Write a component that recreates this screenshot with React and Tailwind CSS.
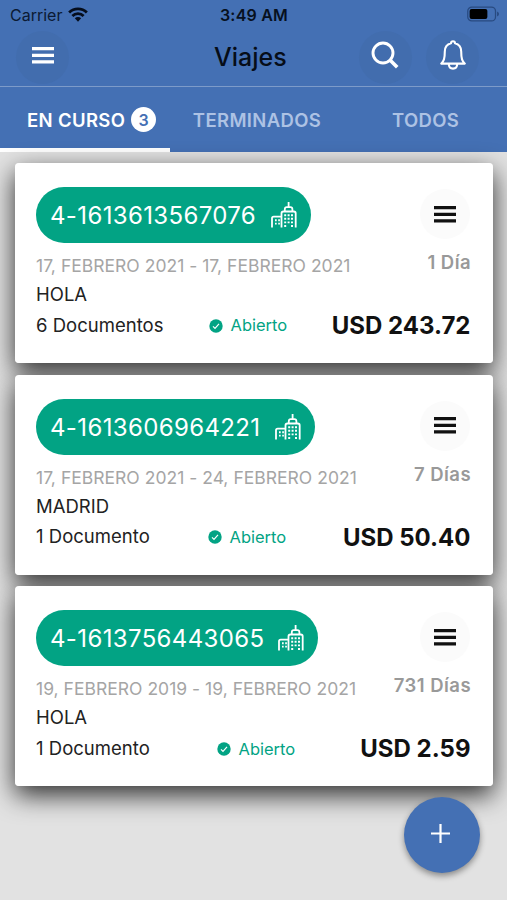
import React from "react";

const trips = [
  { id: "4-1613613567076", pill: "w-[275px]", dates: "17, FEBRERO 2021 - 17, FEBRERO 2021", place: "HOLA", docs: "6 Documentos", days: "1 Día", total: "USD 243.72", status: "pl-[172.5px]" },
  { id: "4-1613606964221", pill: "w-[279px]", dates: "17, FEBRERO 2021 - 24, FEBRERO 2021", place: "MADRID", docs: "1 Documento", days: "7 Días", total: "USD 50.40", status: "pl-[171.5px]" },
  { id: "4-1613756443065", pill: "w-[282px]", dates: "19, FEBRERO 2019 - 19, FEBRERO 2021", place: "HOLA", docs: "1 Documento", days: "731 Días", total: "USD 2.59", status: "pl-[180.5px]" },
];

function MenuIcon({ className }) {
  return (
    <svg className={className} viewBox="0 0 22 17" fill="currentColor">
      <path d="M0 0h22v3.3H0zM0 6.7h22V10H0zM0 13.3h22v3.3H0z" />
    </svg>
  );
}

function BuildingIcon() {
  return (
    <svg className="h-[26px] w-[26px]" viewBox="0 0 26 26" fill="none" stroke="#fff" strokeWidth="1.8">
      <path d="M17.600 0v5M13.800 9.400V7.300Q13.800 5.200 15.800 5.200h3.600Q21.400 5.200 21.400 7.300V9.400M10.500 25.500V11.400Q10.500 9.500 12.400 9.500h10.400Q24.700 9.500 24.700 11.400v14.100M1 25.500V16.300q0-1.700 1.700-1.700h7.800" />
      <path strokeWidth="1.900" d="M13.200 13.200h2M16.600 13.200h2M20 13.200h2M13.200 16.800h2M16.600 16.800h2M20 16.800h2M13.200 20.400h2M16.600 20.400h2M20 20.400h2M13.200 24h2M20 24h2M4 18.200h1.700M7.200 18.200h1.700M4 21.600h1.700M7.200 21.600h1.700" />
    </svg>
  );
}

function TripCard({ trip }) {
  return (
    <article className="h-[200px] shrink-0 rounded shadow-[0_9px_26px_rgba(0,0,0,0.8)]">
      <div className="relative z-10 flex h-full flex-col rounded bg-white pl-[21.5px] pr-[22.5px] pt-6">
        <div className="flex h-14 justify-between">
          <div className={`flex h-14 items-center justify-between rounded-full bg-[#02a384] pl-[14px] pr-[14px] text-white ${trip.pill}`}>
            <span className="whitespace-nowrap pt-[2px] text-[24px] leading-none tracking-[0.36px]">{trip.id}</span>
            <BuildingIcon />
          </div>
          <div className="mr-[1px] mt-[2px] flex h-[50px] w-[50px] items-center justify-center rounded-full bg-[#fbfbfb] text-[#111]">
            <MenuIcon className="h-[17px] w-[22px]" />
          </div>
        </div>
        <div className="mt-[10px] flex h-[27px] justify-between whitespace-nowrap text-[18px] leading-[26px] text-[#a5a5a5]">
          <span className="text-[17.5px] tracking-[0.02px]">{trip.dates}</span>
          <span className="-mr-[0.5px] -mt-[4px] text-[18.5px] font-semibold tracking-[0.45px] text-[#999]">{trip.days}</span>
        </div>
        <div className="h-[29px] text-[18.5px] leading-[28px] text-[#222]">{trip.place}</div>
        <div className="grid h-[31px] grid-cols-1 items-center whitespace-nowrap">
          <span className="col-start-1 row-start-1 text-[18.5px] tracking-[0.02px] text-[#222]">{trip.docs}</span>
          <div className={`col-start-1 row-start-1 flex items-center justify-between ${trip.status}`}>
            <span className="flex items-center gap-2 text-[16.5px] text-[#02a384]">
              <svg className="h-[14px] w-[14px]" viewBox="0 0 14 14">
                <circle cx="7" cy="7" r="6.7" fill="#02a384" />
                <path d="m4 7.3 2 2 4-4.4" fill="none" stroke="#fff" strokeWidth="1.2" />
              </svg>
              Abierto
            </span>
            <span className="pt-[1px] text-[24px] font-bold leading-8 text-[#111]">{trip.total}</span>
          </div>
        </div>
      </div>
    </article>
  );
}

export default function App() {
  return (
    <div className="relative flex h-[900px] w-[507px] flex-col overflow-hidden bg-[#e2e2e2] font-['Inter','Liberation_Sans',sans-serif]">
      <header className="flex h-[152px] shrink-0 flex-col bg-[#4470b4]">
        <div className="grid h-[29px] grid-cols-3 items-center pl-[10px] pr-[8px] text-black">
          <div className="flex items-center gap-[6px] text-[16px] text-[#0b1a33]">
            Carrier
            <svg className="h-[15px] w-[20px]" viewBox="0 0 21 15" fill="none" stroke="#050d1c" strokeWidth="2.9">
              <path d="M1.2 5.4a13.2 13.2 0 0 1 18.6 0M4.6 9a8.3 8.3 0 0 1 11.8 0" />
              <path d="M7.2 11.5a4.7 4.7 0 0 1 6.6 0L10.5 15z" fill="#050d1c" stroke="none" />
            </svg>
          </div>
          <span className="pr-[1px] text-center text-[16px] font-semibold tracking-[0.2px] text-[#071020]">3:49 AM</span>
          <svg className="mb-[1px] h-[16px] w-[32px] justify-self-end" viewBox="0 0 33 16">
            <rect x="0.8" y="0.8" width="28.6" height="14.4" rx="4.2" fill="none" stroke="#284a80" strokeWidth="1.3" />
            <rect x="2.7" y="2.8" width="18.3" height="10.4" rx="2" fill="#000" />
            <path d="M31 5.5q2 .6 2 2.5t-2 2.5z" fill="#284a80" />
          </svg>
        </div>
        <div className="flex h-[58px] items-center border-b border-[#7d9bc9] pl-4 pr-[28px]">
          <div className="flex h-[53px] w-[53px] items-center justify-center rounded-full bg-[#426dae] text-white">
            <MenuIcon className="mb-1 h-[17px] w-[22px]" />
          </div>
          <h1 className="ml-[145px] flex-1 text-[25px] font-medium text-[#060d18]">Viajes</h1>
          <div className="flex h-[53px] w-[53px] items-center justify-center rounded-full bg-[#426dae]">
            <svg className="mb-[5px] mr-px h-[28px] w-[28px]" viewBox="0 0 28 28" fill="none" stroke="#fff">
              <circle cx="12" cy="12" r="10" strokeWidth="2.900" />
              <path d="m19 19 7.200 7.200" strokeWidth="3.600" />
            </svg>
          </div>
          <div className="ml-[14px] flex h-[53px] w-[53px] items-center justify-center rounded-full bg-[#426dae]">
            <svg className="mb-[5px] h-[30px] w-[26px]" viewBox="0 0 26 30" fill="none" stroke="#fff" strokeWidth="2.100" strokeLinejoin="round">
              <path d="M11 3.200Q11 1.200 13 1.200t2 2C19 4.200 21.200 7.300 21.200 11.500c0 7.500 1 9.300 3.600 12.100H1.200C3.800 20.800 4.800 19 4.800 11.500 4.800 7.300 7 4.200 11 3.200zM8.800 24c0 2.800 1.800 4.600 4.200 4.600s4.200-1.800 4.200-4.600" />
            </svg>
          </div>
        </div>
        <nav className="flex h-[65px] text-[18.5px] font-semibold tracking-[0.35px] text-[#adc2e4]">
          <div className="flex w-[170px] items-center gap-[6px] border-b-4 border-white pl-[27px] pt-[6px] text-white">
            EN CURSO
            <span className="mb-[2px] flex h-[25px] w-[25px] items-center justify-center rounded-full bg-white text-[16px] text-[#4470b4]">3</span>
          </div>
          <div className="flex w-[174px] items-center justify-center pt-[2px]">TERMINADOS</div>
          <div className="flex w-[163px] items-center justify-center pt-[2px]">TODOS</div>
        </nav>
      </header>
      <main className="flex flex-1 flex-col gap-[11.7px] pl-[14.5px] pr-[14px] pt-[11px]">
        {trips.map((trip) => (
          <TripCard key={trip.id} trip={trip} />
        ))}
      </main>
      <button className="absolute left-[404px] top-[797px] z-20 flex h-[76px] w-[76px] items-center justify-center rounded-full bg-[#4470b4] shadow-[0_3px_6px_rgba(0,0,0,0.4)]">
        <svg className="mb-1 mr-[3px] h-[19px] w-[19px]" viewBox="0 0 19 19" fill="none" stroke="#fff" strokeWidth="2.2">
          <path d="M9.500 0v19M0 9.500h19" />
        </svg>
      </button>
    </div>
  );
}
